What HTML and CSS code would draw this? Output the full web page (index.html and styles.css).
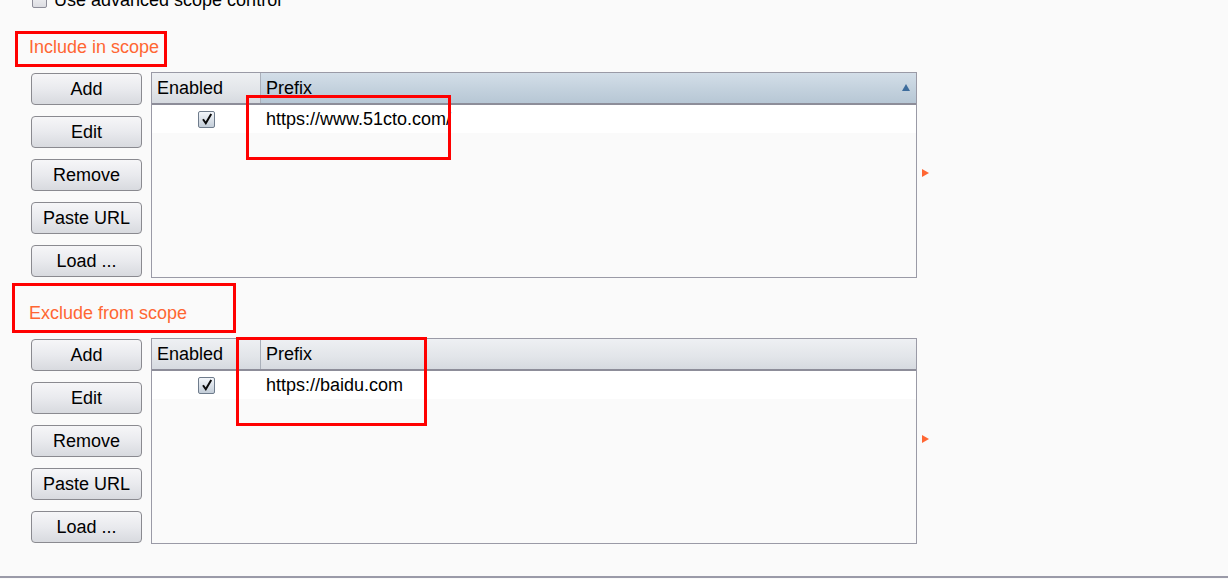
FILE: index.html
```html
<!DOCTYPE html>
<html>
<head>
<meta charset="utf-8">
<link rel="stylesheet" href="styles.css">
</head>
<body>
<div class="page">
  <label class="adv"><span class="cb-empty"></span>Use advanced scope control</label>

  <div class="title title-include">Include in scope</div>
  <div class="section">
    <div class="buttons">
      <button class="btn">Add</button>
      <button class="btn">Edit</button>
      <button class="btn">Remove</button>
      <button class="btn">Paste URL</button>
      <button class="btn">Load ...</button>
    </div>
    <div class="table">
      <div class="thead">
        <div class="th col-en">Enabled</div>
        <div class="th col-px sorted">Prefix<span class="sort"></span></div>
      </div>
      <div class="row">
        <div class="td col-en"><span class="chk"><svg width="12" height="12" viewBox="0 0 12 12"><path d="M2 6.2 L4.8 10.2 L10.2 1" fill="none" stroke="#0a0a0a" stroke-width="2"/></svg></span></div>
        <div class="td col-px">https://www.51cto.com/</div>
      </div>
      <div class="mark mark-a"></div>
    </div>
    <span class="arrow"></span>
  </div>

  <div class="title title-exclude">Exclude from scope</div>
  <div class="section">
    <div class="buttons">
      <button class="btn">Add</button>
      <button class="btn">Edit</button>
      <button class="btn">Remove</button>
      <button class="btn">Paste URL</button>
      <button class="btn">Load ...</button>
    </div>
    <div class="table">
      <div class="thead">
        <div class="th col-en">Enabled</div>
        <div class="th col-px">Prefix</div>
      </div>
      <div class="row">
        <div class="td col-en"><span class="chk"><svg width="12" height="12" viewBox="0 0 12 12"><path d="M2 6.2 L4.8 10.2 L10.2 1" fill="none" stroke="#0a0a0a" stroke-width="2"/></svg></span></div>
        <div class="td col-px">https://baidu.com</div>
      </div>
      <div class="mark mark-b"></div>
    </div>
    <span class="arrow"></span>
  </div>
  <div class="bottom-line"></div>
</div>
</body>
</html>
```

FILE: styles.css
```css
html, body {
  margin: 0;
  padding: 0;
  background: #fafafa;
  overflow: hidden;
}
body {
  font-family: "Liberation Sans", Arial, sans-serif;
  font-size: 18px;
  color: #000;
  width: 1228px;
  height: 579px;
}
.page {
  position: relative;
  display: flow-root;
  height: 579px;
}
.adv {
  display: flex;
  align-items: center;
  margin-top: -10px;
  margin-left: 32px;
  height: 20px;
  line-height: 20px;
  gap: 7px;
}
.cb-empty {
  width: 13px;
  height: 13px;
  border: 1px solid #8d8d99;
  border-radius: 2px;
  background: linear-gradient(#f4f4f6, #dcdde2);
}
.title {
  box-sizing: border-box;
  border: 3px solid #ff0000;
  color: #ff6633;
  font-size: 18px;
  line-height: 20px;
}
.title-include {
  margin-top: 21px;
  margin-left: 15px;
  width: 152px;
  height: 36px;
  padding: 3px 0 0 11px;
}
.title-exclude {
  margin-top: 5px;
  margin-left: 12px;
  width: 224px;
  height: 50px;
  padding: 17px 0 0 14px;
}
.section {
  display: flex;
  align-items: flex-start;
  margin-top: 5px;
  margin-left: 31px;
}
.buttons {
  display: flex;
  flex-direction: column;
  gap: 11px;
  padding-top: 1px;
  width: 111px;
}
.btn {
  box-sizing: border-box;
  width: 111px;
  height: 32px;
  border: 1px solid #8a8a90;
  border-radius: 4px;
  background: linear-gradient(#f6f6f8 0%, #e9eaee 50%, #d8dadf 100%);
  font-family: "Liberation Sans", Arial, sans-serif;
  font-size: 18px;
  color: #000;
  padding: 0;
}
.table {
  position: relative;
  box-sizing: border-box;
  margin-left: 9px;
  width: 766px;
  height: 206px;
  border: 1px solid #9a9aa6;
  background: #fafafa;
}
.thead {
  display: flex;
  height: 32px;
  box-sizing: border-box;
  border-bottom: 2px solid #8d8d99;
  background: linear-gradient(#eef0f3 0%, #e2e5e9 60%, #d6dae0 100%);
}
.th {
  box-sizing: border-box;
  display: flex;
  align-items: center;
  height: 100%;
  padding-left: 5px;
  line-height: 20px;
}
.col-en {
  width: 109px;
  border-right: 1px solid #aab0ba;
}
.col-px {
  flex: 1;
  padding-left: 5px;
}
.th.col-px { position: relative; }
.th.sorted {
  background: linear-gradient(#d3dee8 0%, #c3d1dd 55%, #b7c7d5 100%);
}
.sort {
  position: absolute;
  right: 6px;
  top: 11px;
  width: 0;
  height: 0;
  border-left: 4px solid transparent;
  border-right: 4px solid transparent;
  border-bottom: 7px solid #3d6c9c;
}
.row {
  display: flex;
  height: 28px;
  background: #fff;
}
.td {
  box-sizing: border-box;
  display: flex;
  align-items: center;
  height: 100%;
  line-height: 20px;
}
.td.col-en {
  border-right: none;
  justify-content: center;
}
.td.col-px {
  padding-left: 5px;
}
.chk {
  box-sizing: border-box;
  width: 17px;
  height: 17px;
  border: 1px solid #6f7c8c;
  border-radius: 2px;
  background: linear-gradient(#f3f6fa, #c3cdd8);
  display: flex;
  align-items: center;
  justify-content: center;
}
.mark {
  position: absolute;
  box-sizing: border-box;
  border: 3px solid #ff0000;
}
.mark-a {
  left: 94px;
  top: 22px;
  width: 205px;
  height: 65px;
}
.mark-b {
  left: 84px;
  top: -2px;
  width: 191px;
  height: 89px;
}
.arrow {
  align-self: center;
  margin-left: 5px;
  margin-top: -4px;
  width: 0;
  height: 0;
  border-top: 4px solid transparent;
  border-bottom: 4px solid transparent;
  border-left: 7px solid #ff6633;
}
.bottom-line {
  position: absolute;
  left: 0;
  right: 0;
  top: 576px;
  height: 2px;
  background: #9a9aa8;
}
```
